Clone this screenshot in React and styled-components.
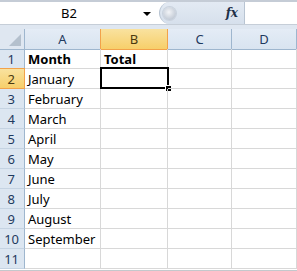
import React from 'react';
import styled, { createGlobalStyle } from 'styled-components';

const GlobalStyle = createGlobalStyle`
  html, body { margin: 0; padding: 0; background: #ffffff; }
  body { font-family: 'Noto Sans', 'Open Sans', sans-serif; }
`;

const months = ['January', 'February', 'March', 'April', 'May', 'June', 'July', 'August', 'September'];
const columns = ['A', 'B', 'C', 'D'];

const Window = styled.div`
  width: 297px;
  height: 271px;
  overflow: hidden;
  background: #ffffff;
  border-bottom: 1px solid #c4c8cc;
  box-sizing: border-box;
`;

// formula bar

const FormulaBar = styled.div`
  height: 29px;
  box-sizing: border-box;
  border-top: 2px solid #c5ccd6;
  background: #dfe7f1;
  display: flex;
  flex-direction: column;
`;

const FormulaRow = styled.div`
  height: 22px;
  display: flex;
  background: #ffffff;
  border-bottom: 1px solid #c6ced8;
`;

const NameBox = styled.div`
  width: 159px;
  display: flex;
  align-items: center;
  font-size: 13px;
  color: #000;
`;

const NameText = styled.span`
  flex: 1;
  text-align: center;
  padding-left: 30px;
  padding-right: 35px;
`;

const DropArrow = styled.span`
  width: 0;
  height: 0;
  border-left: 4px solid transparent;
  border-right: 4px solid transparent;
  border-top: 4px solid #000;
  margin-right: 8px;
  margin-top: 2px;
`;

const Pill = styled.div`
  width: 84px;
  display: flex;
  align-items: center;
  background: linear-gradient(#e3eaf3, #d6e0ec);
  border-left: 1px solid #b8c4d2;
  border-right: 1px solid #b8c4d2;
  border-radius: 12px 0 0 12px;
`;

const Knob = styled.span`
  width: 13px;
  height: 13px;
  margin-left: 3px;
  border-radius: 50%;
  background: radial-gradient(circle at 45% 40%, #f2f4f7, #c3cbd6 70%, #aab4c1);
  box-shadow: 0 0 0 1px #c9d2dd;
`;

const Fx = styled.span`
  margin-left: auto;
  margin-right: 6px;
  font-family: 'DejaVu Serif', 'Liberation Serif', serif;
  font-style: italic;
  font-weight: bold;
  font-size: 12px;
  color: #1d3047;
`;

const FormulaInput = styled.div`
  flex: 1;
  background: #ffffff;
`;

// sheet grid

const Sheet = styled.div`
  display: grid;
  grid-template-columns: 25px 76px 67px 64px 65px;
  grid-auto-rows: 20px;
`;

const HeaderCell = styled.div`
  height: 21px;
  box-sizing: border-box;
  display: flex;
  align-items: center;
  justify-content: center;
  font-size: 13px;
  color: ${(p) => (p.active ? '#4a3a10' : '#1f3a5e')};
  background: ${(p) => (p.active
    ? 'linear-gradient(#f9e29f, #f7cf6a)'
    : 'linear-gradient(#e4ecf6, #d9e4f0)')};
  border-right: 1px solid ${(p) => (p.active ? '#f2a24a' : '#9eb6ce')};
  border-bottom: 1px solid ${(p) => (p.active ? '#f2a24a' : '#9eb6ce')};
  border-left: ${(p) => (p.active ? '1px solid #f2a24a' : 'none')};
  margin-left: ${(p) => (p.active ? '-1px' : '0')};
`;

const Corner = styled(HeaderCell)`
  position: relative;
  background: #dfe7f1;
`;

const CornerTriangle = styled.span`
  position: absolute;
  right: 3px;
  bottom: 3px;
  width: 0;
  height: 0;
  border-left: 12px solid transparent;
  border-bottom: 12px solid #b4c0cd;
`;

const RowHeader = styled.div`
  box-sizing: border-box;
  display: flex;
  align-items: center;
  justify-content: flex-end;
  padding-right: ${(p) => (p.wide ? '5px' : '9px')};
  font-size: 13px;
  color: ${(p) => (p.active ? '#4a3a10' : '#1f3a5e')};
  background: ${(p) => (p.active
    ? 'linear-gradient(#f9e29f, #f7cf6a)'
    : '#dce6f1')};
  border-right: 1px solid ${(p) => (p.active ? '#f2a24a' : '#9eb6ce')};
  border-bottom: 1px solid ${(p) => (p.active ? '#f2a24a' : '#c5d3e2')};
  border-top: ${(p) => (p.active ? '1px solid #f2a24a' : 'none')};
  margin-top: ${(p) => (p.active ? '-1px' : '0')};
`;

const Cell = styled.div`
  box-sizing: border-box;
  position: relative;
  display: flex;
  align-items: center;
  padding-left: 3px;
  white-space: nowrap;
  font-size: 13px;
  font-weight: ${(p) => (p.bold ? 'bold' : 'normal')};
  color: #000;
  border-right: 1px solid #d8d8d8;
  border-bottom: 1px solid #d8d8d8;
`;

const Selection = styled.div`
  position: absolute;
  top: -2px;
  left: -1px;
  right: -2px;
  bottom: -1px;
  border: 2px solid #000;
  pointer-events: none;
`;

const FillHandle = styled.span`
  position: absolute;
  right: -4px;
  bottom: -4px;
  width: 5px;
  height: 5px;
  background: #000;
  border-top: 1px solid #fff;
  border-left: 1px solid #fff;
`;

function App() {
  const rows = [['Month', 'Total'], ...months.map((m) => [m, '']), ['', '']];

  return (
    <Window>
      <GlobalStyle />
      <FormulaBar>
        <FormulaRow>
          <NameBox>
            <NameText>B2</NameText>
            <DropArrow />
          </NameBox>
          <Pill>
            <Knob />
            <Fx>fx</Fx>
          </Pill>
          <FormulaInput />
        </FormulaRow>
      </FormulaBar>
      <Sheet>
        <Corner>
          <CornerTriangle />
        </Corner>
        {columns.map((c) => (
          <HeaderCell key={c} active={c === 'B'}>{c}</HeaderCell>
        ))}
        {rows.map((row, i) => (
          <React.Fragment key={i}>
            <RowHeader active={i === 1} wide={i >= 9}>{i + 1}</RowHeader>
            <Cell bold={i === 0}>{row[0]}</Cell>
            <Cell bold={i === 0}>
              {row[1]}
              {i === 1 && (
                <Selection>
                  <FillHandle />
                </Selection>
              )}
            </Cell>
            <Cell />
            <Cell />
          </React.Fragment>
        ))}
      </Sheet>
    </Window>
  );
}

export default App;
